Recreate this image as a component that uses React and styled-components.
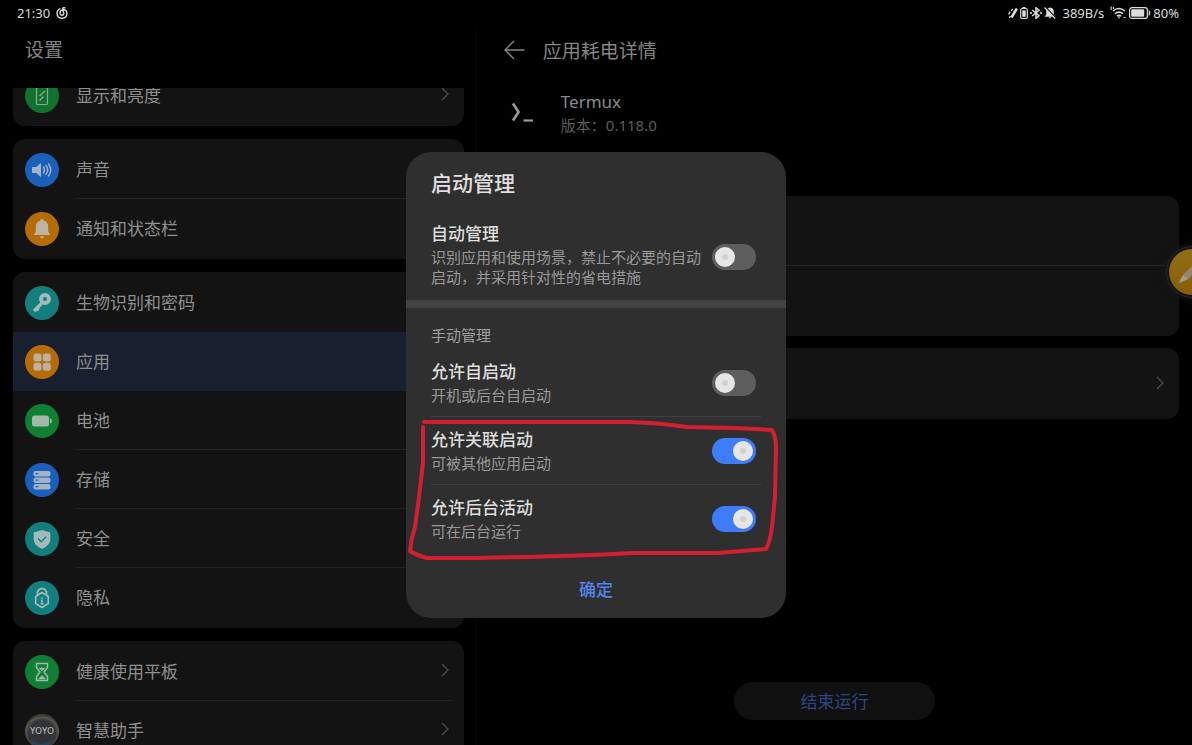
import React, { useLayoutEffect, useRef, useState } from 'react';
import styled, { createGlobalStyle } from 'styled-components';

const icons = {
  display: (
    <g fill="none" stroke="#8fa996" strokeWidth="1.2">
      <rect x="11.5" y="8.5" width="11" height="17" rx="1" />
      <path d="M14.500 17l5.500-5M14.500 21.500l4-4" />
    </g>
  ),
  sound: (
    <g>
      <path d="M7 14h4l5-4v14l-5-4H7z" fill="#a3b4c9" />
      <path
        d="M18.5 14q2 3 0 6M21 12.500q3.500 4.500 0 9M23.500 11q4.500 6 0 12"
        fill="none"
        stroke="#a3b4c9"
        strokeWidth="1.400"
        strokeLinecap="round"
      />
    </g>
  ),
  bell: (
    <g fill="#beb3a3">
      <path d="M17 7c.9 0 1.500.6 1.500 1.400 3 .8 4.700 3 4.700 6v5l2 3.600H8.800l2-3.600v-5c0-3 1.700-5.200 4.700-6 0-.8.6-1.400 1.500-1.400z" />
      <path d="M14.800 24.500h4.400q-.6 2-2.200 2t-2.200-2z" />
    </g>
  ),
  key: (
    <g fill="none" stroke="#a2bab9">
      <circle cx="20" cy="13" r="4" strokeWidth="4" />
      <path d="M16.500 17.500L9 25M11.500 22l2.200 2.200" strokeWidth="3.400" />
    </g>
  ),
  apps: (
    <g fill="#bdb0a0">
      <rect x="8.500" y="8.500" width="8" height="8" rx="2.500" />
      <rect x="17.800" y="8.500" width="8" height="8" rx="2.500" />
      <rect x="8.500" y="17.800" width="8" height="8" rx="2.500" />
      <rect x="17.800" y="17.800" width="8" height="8" rx="2.500" />
    </g>
  ),
  battery: (
    <g fill="#a2b8a8">
      <rect x="7" y="11.500" width="17" height="11" rx="2.500" />
      <path d="M25 14.500q2 .4 2 2.500t-2 2.500z" />
    </g>
  ),
  storage: (
    <g>
      <rect x="8.500" y="8" width="17" height="5.400" rx="2" fill="#a3b4c9" />
      <rect x="8.500" y="14.500" width="17" height="5.400" rx="2" fill="#a3b4c9" />
      <rect x="8.500" y="21" width="17" height="5.400" rx="2" fill="#a3b4c9" />
      <path d="M10.500 10.700h3M10.500 17.200h3M10.500 23.700h3" stroke="#2362b4" strokeWidth="1.300" />
    </g>
  ),
  shield: (
    <g>
      <path d="M17 8l8.300 2.600v6.600c0 4-3 7.300-8.300 9.600-5.300-2.300-8.300-5.600-8.300-9.600v-6.600z" fill="#a2bab9" />
      <path d="M13 16.500l3.200 3.200 5-5" fill="none" stroke="#14807f" strokeWidth="1.500" />
    </g>
  ),
  privacy: (
    <g fill="none" stroke="#a2bab9" strokeWidth="1.700">
      <path d="M12.500 14v-3L14 8.500l3-1 3 1 1.500 2.500v3" />
      <path d="M17 11.500l6.300 4v7L17 26.500l-6.300-4v-7z" strokeLinejoin="round" />
      <path d="M17 16.200v1.600M15.800 19.300H17v3.400M15.600 22.700h3" strokeWidth="1.400" />
    </g>
  ),
  hourglass: (
    <g fill="none" stroke="#a2b8a8" strokeWidth="1.500" strokeLinejoin="round">
      <path d="M11.500 8.500h11v4L19 17l3.500 4.500v4h-11v-4L15 17l-3.500-4.500z" />
      <path d="M14 13h6l-3 3zM13.500 24l3.500-3.500 3.500 3.500z" fill="#a2b8a8" strokeWidth="0.500" />
    </g>
  ),
  yoyo: (
    <g>
      <defs>
        <radialGradient id="orb" cx="50%" cy="58%" r="52%">
          <stop offset="0" stopColor="#2e2f31" />
          <stop offset="0.750" stopColor="#333537" />
          <stop offset="0.950" stopColor="#5a5c52" />
          <stop offset="1" stopColor="#3c3d38" />
        </radialGradient>
      </defs>
      <circle cx="17" cy="17" r="17" fill="url(#orb)" />
      <path d="M5 25q12 10 25-1-5 9-13 9T5 25z" fill="#274557" />
      <text x="17" y="20" textAnchor="middle" fontSize="9" fontWeight="500" fill="#b4b4b4">
        YOYO
      </text>
    </g>
  ),
};

const groups = [
  [{ name: '显示和亮度', icon: 'display', color: '#11712f' }],
  [
    { name: '声音', icon: 'sound', color: '#1a5fb9' },
    { name: '通知和状态栏', icon: 'bell', color: '#b56b06' },
  ],
  [
    { name: '生物识别和密码', icon: 'key', color: '#127e7d' },
    { name: '应用', icon: 'apps', color: '#b56b06', selected: true },
    { name: '电池', icon: 'battery', color: '#0f7f33' },
    { name: '存储', icon: 'storage', color: '#1a5fb9' },
    { name: '安全', icon: 'shield', color: '#127e7d' },
    { name: '隐私', icon: 'privacy', color: '#127e7d' },
  ],
  [
    { name: '健康使用平板', icon: 'hourglass', color: '#0f7f33' },
    { name: '智慧助手', icon: 'yoyo', color: '#2c2e30' },
  ],
];

const Chevron = () => (
  <svg width="8" height="14" viewBox="0 0 8 14" fill="none" stroke="#4a4a4a" strokeWidth="1.400">
    <path d="M1 1l6 6-6 6" />
  </svg>
);

const StatusBar = () => (
  <Status>
    <StatusSide>
      <span>21:30</span>
      <svg width="12" height="12" viewBox="0 0 12 12" fill="none" stroke="#ddd" strokeWidth="1.400">
        <path d="M4.500 1.600Q1 2.600 1 6.200 1.200 11 6 11.200 10.800 11 11 6.500 10.800 3 7.500 2.800 4 3.200 4 6.200q.2 2 2 2t1.800-2L6.500 2.500Q6.500.6 8 .6l1.500.6" />
      </svg>
    </StatusSide>
    <StatusSide>
      <StatusIcons>
        <svg width="10" height="12" viewBox="0 0 10 12" stroke="#ddd" fill="none">
          <path d="M3.500 10.500L8.800 1.500" strokeWidth="2.600" />
          <path d="M.6 7.500l1.600-3M3.400 3.800l1.400-2M1.300 11l1-2" strokeWidth="1.400" />
        </svg>
        <svg width="8" height="12" viewBox="0 0 8 12">
          <path d="M2.500 0h3v1.500h-3z" fill="#ddd" />
          <rect x="0.700" y="1.500" width="6.600" height="10" rx="1.500" fill="none" stroke="#ddd" strokeWidth="1.200" />
          <rect x="2.300" y="3.400" width="3.400" height="6.400" fill="#ddd" />
        </svg>
        <svg width="12" height="12" viewBox="0 0 12 12" fill="none" stroke="#ddd" strokeWidth="1.500">
          <path d="M2.200 3L9 8.700 6 11.300V.7L9 3.300 2.200 9" />
          <path d="M0 6h2M10 6h2" />
        </svg>
        <svg width="12" height="12" viewBox="0 0 12 12">
          <path d="M6 .5q3.800.7 3.800 4v3.200L11.500 9.800h-11l1.700-2.100V4.500Q2.200 1.200 6 .5zM4.500 10.300h3L6 11.800z" fill="#ddd" />
          <path d="M1.500 0l10.500 11" stroke="#000" strokeWidth="1.400" />
          <path d="M.5.500l10.700 11" stroke="#ddd" strokeWidth="1.200" />
        </svg>
      </StatusIcons>
      <span>389B/s</span>
      <StatusIcons>
        <svg width="17" height="13" viewBox="0 0 17 13" fill="none" stroke="#ddd" strokeWidth="1.600">
          <path d="M3 5q6-5 12 0M5 7.700q4-3.200 8 0M7 10.200q2-1.600 4 0" />
          <path d="M9 10.500v2M1.500.500Q.5 2 1.500 4M3.500 1v2M13.500 11.500h2" strokeWidth="1.200" />
        </svg>
        <svg width="22" height="12" viewBox="0 0 22 12">
          <rect x="0.600" y="0.600" width="17.800" height="10.800" rx="2.500" fill="none" stroke="#ddd" strokeWidth="1.200" />
          <rect x="2.200" y="2.200" width="13" height="7.600" rx="1" fill="#ddd" />
          <path d="M20 3.500q1 .5 1 2.500t-1 2.500z" fill="#ddd" stroke="#ddd" strokeWidth="0.500" />
        </svg>
        <span>80%</span>
      </StatusIcons>
    </StatusSide>
  </Status>
);

const Sidebar = () => {
  const listRef = useRef(null);

  useLayoutEffect(() => {
    listRef.current.scrollTop = 23;
  }, []);

  return (
    <SidePane>
      <SideTitle>设置</SideTitle>
      <List ref={listRef}>
        {groups.map((rows) => (
          <Card key={rows[0].name}>
            {rows.map((row, i) => (
              <Row key={row.name} href="#" $selected={row.selected}>
                <svg width="34" height="34" viewBox="0 0 34 34">
                  <circle cx="17" cy="17" r="17" fill={row.color} />
                  {icons[row.icon]}
                </svg>
                <RowBody
                  $line={i < rows.length - 1 && !row.selected && !rows[i + 1].selected}
                >
                  {row.name}
                  <Chevron />
                </RowBody>
              </Row>
            ))}
          </Card>
        ))}
      </List>
    </SidePane>
  );
};

const Detail = () => (
  <DetailPane>
    <DetailHeader>
      <BackButton aria-label="返回">
        <svg width="21" height="20" viewBox="0 0 21 20" fill="none" stroke="#858585" strokeWidth="1.400">
          <path d="M10 1L1 10l9 9M1 10h19.500" />
        </svg>
      </BackButton>
      <DetailTitle>应用耗电详情</DetailTitle>
    </DetailHeader>
    <AppInfo>
      <svg width="24" height="22" viewBox="0 0 24 22" fill="none" stroke="#999" strokeWidth="2.600">
        <path d="M2 1.500L7.500 10 2 18.500" />
        <path d="M12.500 18.500H22" strokeWidth="2.200" />
      </svg>
      <div>
        <AppName>Termux</AppName>
        <AppVersion>版本：0.118.0</AppVersion>
      </div>
    </AppInfo>
    <DetailCards>
      <DetailCard>
        <DetailRow $line />
        <DetailRow />
      </DetailCard>
      <DetailCard>
        <DetailRow>
          <Chevron />
        </DetailRow>
      </DetailCard>
    </DetailCards>
    <StopButton>结束运行</StopButton>
  </DetailPane>
);

const Option = ({ id, title, desc, checked, onChange, line }) => (
  <OptionRow $line={line}>
    <OptionLabel htmlFor={id}>
      <OptionTitle>{title}</OptionTitle>
      <OptionDesc>{desc}</OptionDesc>
    </OptionLabel>
    <Switch id={id} type="checkbox" role="switch" checked={checked} onChange={onChange} />
  </OptionRow>
);

const LaunchDialog = () => {
  const [values, setValues] = useState({
    auto: false,
    self: false,
    linked: true,
    background: true,
  });

  const toggle = (key) => () => setValues({ ...values, [key]: !values[key] });

  return (
    <Overlay>
      <Dialog role="dialog" aria-labelledby="launch-title">
        <DialogTitle id="launch-title">启动管理</DialogTitle>
        <AutoSection>
          <Option
            id="auto"
            title="自动管理"
            desc="识别应用和使用场景，禁止不必要的自动启动，并采用针对性的省电措施"
            checked={values.auto}
            onChange={toggle('auto')}
          />
        </AutoSection>
        <ManualSection>
          <SubHeading>手动管理</SubHeading>
          <Option
            id="self"
            title="允许自启动"
            desc="开机或后台自启动"
            checked={values.self}
            onChange={toggle('self')}
            line
          />
          <Option
            id="linked"
            title="允许关联启动"
            desc="可被其他应用启动"
            checked={values.linked}
            onChange={toggle('linked')}
            line
          />
          <Option
            id="background"
            title="允许后台活动"
            desc="可在后台运行"
            checked={values.background}
            onChange={toggle('background')}
          />
        </ManualSection>
        <ConfirmButton>确定</ConfirmButton>
        <Marker viewBox="0 0 380 150">
          <path d="M18 5L120 5 224 5Q255 6 281 10L327 11 366 13Q370 20 370 30L369 80 366 110Q364 125 360 132L311 136 227 136 187 138 121 140 70 141 21 141Q10 138 4 134Q5 122 9 110L13 80 17 46 17 10" />
        </Marker>
      </Dialog>
    </Overlay>
  );
};

const App = () => {
  return (
    <Screen>
      <GlobalStyle />
      <StatusBar />
      <Main>
        <Sidebar />
        <Detail />
      </Main>
      <PenButton aria-label="画笔">
        <svg width="24" height="24" viewBox="0 0 24 24">
          <path d="M1 23l4-8L18 2l5 5L10 19z" fill="#8d8777" />
          <path d="M1 23l4-8 5 4z" fill="#a39d8c" />
        </svg>
      </PenButton>
      <LaunchDialog />
    </Screen>
  );
};

const GlobalStyle = createGlobalStyle`
  * {
    box-sizing: border-box;
  }
  body {
    margin: 0;
    background: #000;
    font-family: 'Noto Sans', 'Noto Sans CJK SC', sans-serif;
  }
  svg {
    display: block;
    flex-shrink: 0;
  }
`;

const Screen = styled.div`
  position: relative;
  display: flex;
  flex-direction: column;
  height: 100vh;
  overflow: hidden;
`;

const Status = styled.header`
  display: flex;
  justify-content: space-between;
  height: 25px;
  padding: 0 13px 0 17px;
  font-size: 13px;
  color: #ddd;
`;

const StatusSide = styled.div`
  display: flex;
  align-items: center;
  gap: 6px;
`;

const StatusIcons = styled.div`
  display: flex;
  align-items: center;
  gap: 2px;
`;

const Main = styled.main`
  flex: 1;
  display: flex;
  min-height: 0;
`;

const SidePane = styled.nav`
  display: flex;
  flex-direction: column;
  width: 40%;
  border-right: 1px solid #070707;
`;

const SideTitle = styled.h1`
  margin: 0 0 13px;
  padding-left: 25px;
  line-height: 50px;
  font-size: 19px;
  font-weight: 400;
  color: #858585;
`;

const List = styled.div`
  flex: 1;
  display: flex;
  flex-direction: column;
  gap: 13px;
  padding: 0 12px 0 13px;
  overflow-y: auto;
  scrollbar-width: none;
`;

const Card = styled.section`
  flex-shrink: 0;
  padding: 1px 0;
  border-radius: 12px;
  background: #131313;
`;

const Row = styled.a`
  display: flex;
  align-items: center;
  gap: 17px;
  height: 59px;
  padding: 0 12px;
  background: ${({ $selected }) => ($selected ? '#181f2e' : 'none')};
  text-decoration: none;
  color: #8f8f8f;
  font-size: 17px;
`;

const RowBody = styled.div`
  flex: 1;
  display: flex;
  align-items: center;
  justify-content: space-between;
  height: 100%;
  padding: 0 3px 2px 0;
  border-bottom: 1px solid ${({ $line }) => ($line ? '#232323' : 'transparent')};
`;

const DetailPane = styled.section`
  flex: 1;
  display: flex;
  flex-direction: column;
`;

const DetailHeader = styled.div`
  display: flex;
  align-items: center;
  gap: 18px;
  height: 50px;
  padding-left: 27px;
`;

const BackButton = styled.button`
  padding: 0;
  border: none;
  background: none;
  cursor: pointer;
`;

const DetailTitle = styled.h2`
  margin: 0;
  font-size: 19px;
  font-weight: 400;
  color: #858585;
`;

const AppInfo = styled.div`
  display: flex;
  align-items: center;
  gap: 26px;
  padding: 15px 34px 0;
`;

const AppName = styled.div`
  font-size: 17px;
  line-height: 24px;
  color: #8a8a8a;
`;

const AppVersion = styled.div`
  font-size: 15px;
  line-height: 22px;
  color: #5c5c5c;
`;

const DetailCards = styled.div`
  flex: 1;
  display: flex;
  flex-direction: column;
  gap: 12px;
  padding: 60px 13px 0;
`;

const DetailCard = styled.div`
  padding: 1px 0;
  border-radius: 12px;
  background: #131313;
`;

const DetailRow = styled.div`
  display: flex;
  align-items: center;
  justify-content: flex-end;
  height: 69px;
  margin: 0 12px;
  padding-right: 3px;
  border-bottom: 1px solid ${({ $line }) => ($line ? '#232323' : 'transparent')};
`;

const StopButton = styled.button`
  align-self: center;
  width: 201px;
  height: 38px;
  margin-bottom: 25px;
  padding: 0 0 2px;
  border: none;
  border-radius: 19px;
  background: #101010;
  font-family: inherit;
  font-size: 17px;
  color: #2c4785;
  cursor: pointer;
`;

const PenButton = styled.button`
  position: absolute;
  top: 249px;
  right: -23px;
  width: 46px;
  height: 46px;
  padding: 0 0 0 9px;
  border: none;
  border-radius: 50%;
  background: linear-gradient(#8f7012, #8a5c0a);
  box-shadow: 0 0 0 2px #151515, 0 0 0 3px #262626, 0 0 8px 4px #181818;
  cursor: pointer;
`;

const Overlay = styled.div`
  position: absolute;
  inset: 25px 0 0;
  display: flex;
  align-items: center;
  justify-content: center;
`;

const Dialog = styled.div`
  position: relative;
  width: 380px;
  border-radius: 25px;
  background: #2f2f2f;
`;

const DialogTitle = styled.h2`
  margin: 0;
  padding: 0 25px;
  line-height: 62px;
  font-size: 21px;
  font-weight: 500;
  color: #e0e0e0;
`;

const AutoSection = styled.div`
  padding: 0 25px;
  border-bottom: 8px solid #434343;
`;

const ManualSection = styled.div`
  padding: 17px 25px 0;
`;

const SubHeading = styled.h3`
  margin: 0 0 4px;
  font-size: 15px;
  line-height: 20px;
  font-weight: 400;
  color: #a0a0a0;
`;

const OptionRow = styled.div`
  display: flex;
  align-items: center;
  justify-content: space-between;
  gap: 6px;
  padding-right: 5px;
  border-bottom: ${({ $line }) => ($line ? '1px solid #414141' : 'none')};
`;

const OptionLabel = styled.label`
  padding: 11px 0;

  ${AutoSection} & {
    padding: 8px 0 13px;
  }
`;

const OptionTitle = styled.div`
  margin-bottom: 1px;
  font-size: 17px;
  line-height: 24px;
  font-weight: 500;
  color: #dedede;
`;

const OptionDesc = styled.div`
  font-size: 15px;
  line-height: 20px;
  color: #999;
`;

const Switch = styled.input`
  appearance: none;
  flex-shrink: 0;
  display: flex;
  width: 44px;
  height: 26px;
  margin: 0;
  padding: 3px;
  border-radius: 13px;
  background: #5e5e5e;
  cursor: pointer;

  &::before {
    content: '';
    width: 20px;
    height: 20px;
    border-radius: 50%;
    background: radial-gradient(circle, #cfcfcf 2px, #e6e6e6 4px);
  }

  &:checked {
    justify-content: flex-end;
    background: #3f7cfa;
  }
`;

const ConfirmButton = styled.button`
  display: block;
  width: 330px;
  height: 40px;
  margin: 16px auto 10px;
  padding: 0;
  border: none;
  background: none;
  font-family: inherit;
  font-size: 17px;
  font-weight: 500;
  color: #5485ee;
  cursor: pointer;
`;

// hand-drawn frame over the last two options
const Marker = styled.svg`
  position: absolute;
  top: 265px;
  left: 0;
  width: 100%;
  pointer-events: none;
  fill: none;
  stroke: #d41f30;
  stroke-width: 4px;
  stroke-linejoin: round;
  stroke-linecap: round;
`;

export default App;
